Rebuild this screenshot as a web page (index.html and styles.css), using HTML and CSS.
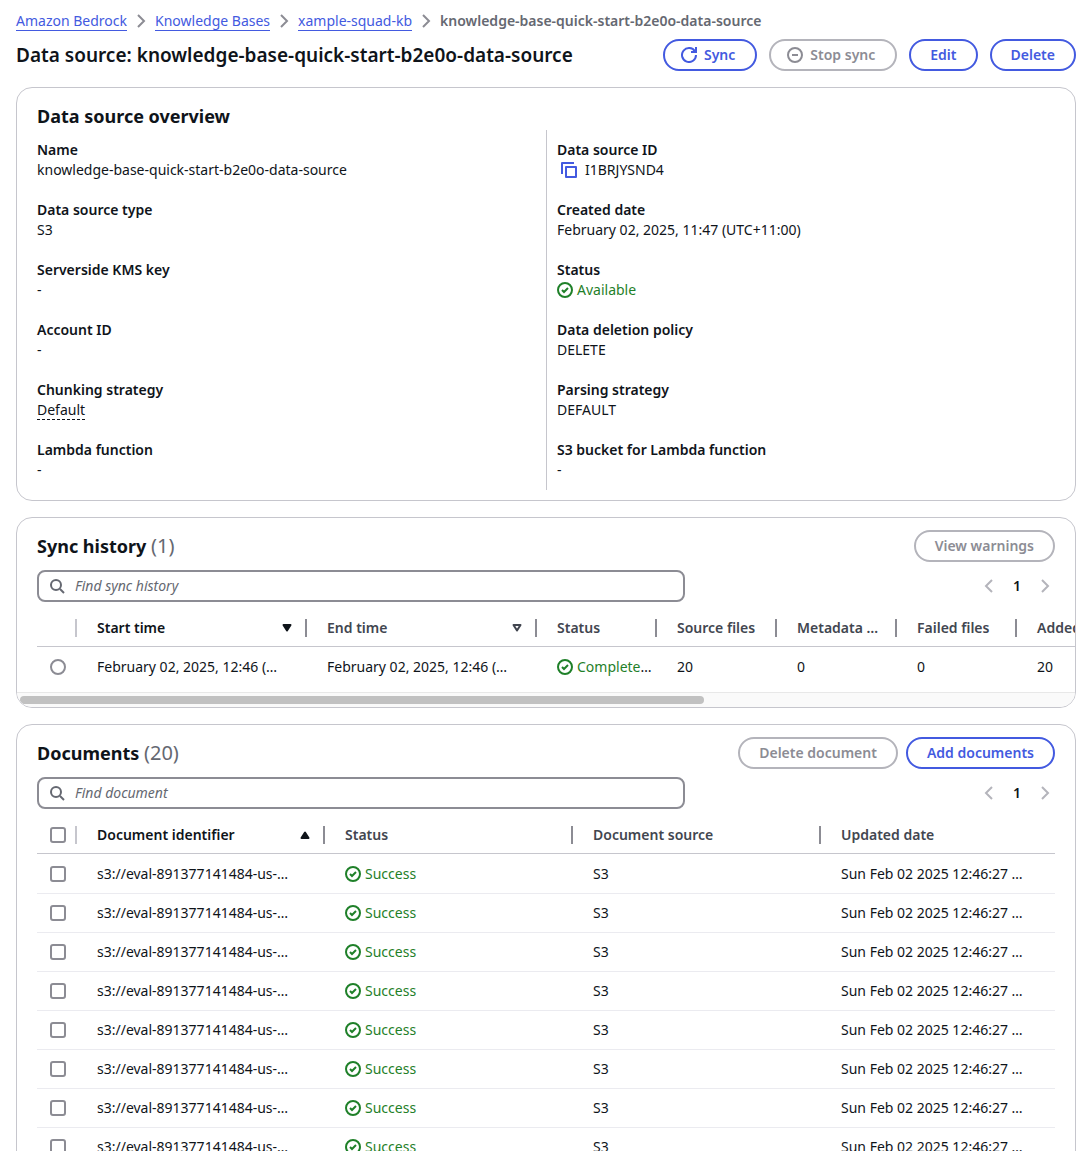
FILE: index.html
```html
<!DOCTYPE html>
<html lang="en">
<head>
<meta charset="utf-8">
<title>knowledge-base-quick-start-b2e0o-data-source</title>
<link rel="stylesheet" href="styles.css">
</head>
<body>
<svg class="sprite" aria-hidden="true">
  <symbol id="chevron" viewBox="0 0 16 16"><path d="m5 2 6 6-6 6"/></symbol>
  <symbol id="refresh" viewBox="0 0 16 16"><path d="M10 5h5V0M15 8A7 7 0 1 1 14 4.4"/></symbol>
  <symbol id="stop" viewBox="0 0 16 16"><circle cx="8" cy="8" r="7"/><path d="M5 8h6"/></symbol>
  <symbol id="copy" viewBox="0 0 16 16"><path d="M5 5h10v10H5zM1 12V1h12" stroke-linejoin="round"/></symbol>
  <symbol id="check" viewBox="0 0 16 16"><circle cx="8" cy="8" r="7"/><path d="m5 8 2 2 4-4"/></symbol>
  <symbol id="search" viewBox="0 0 16 16"><circle cx="7" cy="7" r="5"/><path d="m15 15-4-4"/></symbol>
  <symbol id="sort" viewBox="0 0 16 16"><path d="M4.500 5h7L8 10.500z" stroke-linejoin="round"/></symbol>
</svg>
<main class="page">
  <nav aria-label="Breadcrumbs">
    <ol class="crumbs">
      <li><a href="#">Amazon Bedrock</a><svg class="icon"><use href="#chevron"/></svg></li>
      <li><a href="#">Knowledge Bases</a><svg class="icon"><use href="#chevron"/></svg></li>
      <li><a href="#">xample-squad-kb</a><svg class="icon"><use href="#chevron"/></svg></li>
      <li class="current" aria-current="page">knowledge-base-quick-start-b2e0o-data-source</li>
    </ol>
  </nav>
  <header class="bar title-bar">
    <h1>Data source: knowledge-base-quick-start-b2e0o-data-source</h1>
    <div class="actions wide">
      <button type="button" class="btn with-icon"><svg class="icon"><use href="#refresh"/></svg>Sync</button>
      <button type="button" class="btn with-icon" disabled><svg class="icon"><use href="#stop"/></svg>Stop sync</button>
      <button type="button" class="btn">Edit</button>
      <button type="button" class="btn">Delete</button>
    </div>
  </header>

  <section class="card overview">
    <h2>Data source overview</h2>
    <div class="columns">
      <dl>
        <div><dt>Name</dt><dd>knowledge-base-quick-start-b2e0o-data-source</dd></div>
        <div><dt>Data source type</dt><dd>S3</dd></div>
        <div><dt>Serverside KMS key</dt><dd>-</dd></div>
        <div><dt>Account ID</dt><dd>-</dd></div>
        <div><dt>Chunking strategy</dt><dd><span class="hint">Default</span></dd></div>
        <div><dt>Lambda function</dt><dd>-</dd></div>
      </dl>
      <dl>
        <div><dt>Data source ID</dt><dd class="copyable"><button type="button" class="icon-btn" aria-label="Copy"><svg class="icon"><use href="#copy"/></svg></button>I1BRJYSND4</dd></div>
        <div><dt>Created date</dt><dd>February 02, 2025, 11:47 (UTC+11:00)</dd></div>
        <div><dt>Status</dt><dd><span class="ok"><svg class="icon"><use href="#check"/></svg>Available</span></dd></div>
        <div><dt>Data deletion policy</dt><dd>DELETE</dd></div>
        <div><dt>Parsing strategy</dt><dd>DEFAULT</dd></div>
        <div><dt>S3 bucket for Lambda function</dt><dd>-</dd></div>
      </dl>
    </div>
  </section>

  <section class="card">
    <div class="bar">
      <h2>Sync history <span class="count">(1)</span></h2>
      <div class="actions"><button type="button" class="btn" disabled>View warnings</button></div>
    </div>
    <div class="bar tools">
      <label class="search"><svg class="icon"><use href="#search"/></svg><input type="search" placeholder="Find sync history" aria-label="Find sync history"></label>
      <div class="pager">
        <button type="button" class="icon-btn" aria-label="Previous page" disabled><svg class="icon flip"><use href="#chevron"/></svg></button>
        <button type="button" class="icon-btn page-no">1</button>
        <button type="button" class="icon-btn" aria-label="Next page" disabled><svg class="icon"><use href="#chevron"/></svg></button>
      </div>
    </div>
    <div class="scroller">
      <table class="sync">
        <colgroup><col class="c-select"><col class="c-time"><col class="c-time"><col class="c-count"><col class="c-count"><col class="c-count"><col class="c-count"><col class="c-count"></colgroup>
        <thead><tr>
          <th class="select"></th>
          <th class="sorted"><div class="sort">Start time<svg class="icon solid"><use href="#sort"/></svg></div></th>
          <th><div class="sort">End time<svg class="icon"><use href="#sort"/></svg></div></th>
          <th>Status</th><th>Source files</th><th>Metadata …</th><th>Failed files</th><th>Added</th>
        </tr></thead>
        <tbody><tr>
          <td class="select"><input type="radio" name="sync" aria-label="Select sync"></td>
          <td>February 02, 2025, 12:46 (…</td>
          <td>February 02, 2025, 12:46 (…</td>
          <td class="state"><span class="ok"><svg class="icon"><use href="#check"/></svg>Complete</span>…</td>
          <td>20</td><td>0</td><td>0</td><td>20</td>
        </tr></tbody>
      </table>
    </div>
    <div class="track"><div class="thumb"></div></div>
  </section>

  <section class="card">
    <div class="bar">
      <h2>Documents <span class="count">(20)</span></h2>
      <div class="actions">
        <button type="button" class="btn" disabled>Delete document</button>
        <button type="button" class="btn">Add documents</button>
      </div>
    </div>
    <div class="bar tools">
      <label class="search"><svg class="icon"><use href="#search"/></svg><input type="search" placeholder="Find document" aria-label="Find document"></label>
      <div class="pager">
        <button type="button" class="icon-btn" aria-label="Previous page" disabled><svg class="icon flip"><use href="#chevron"/></svg></button>
        <button type="button" class="icon-btn page-no">1</button>
        <button type="button" class="icon-btn" aria-label="Next page" disabled><svg class="icon"><use href="#chevron"/></svg></button>
      </div>
    </div>
    <div class="scroller inset">
      <table class="docs">
        <colgroup><col class="c-select"><col class="c-doc"><col class="c-doc"><col class="c-doc"><col></colgroup>
        <thead><tr>
          <th class="select"><input type="checkbox" aria-label="Select all documents"></th>
          <th class="sorted"><div class="sort">Document identifier<svg class="icon solid up"><use href="#sort"/></svg></div></th>
          <th>Status</th><th>Document source</th><th>Updated date</th>
        </tr></thead>
        <tbody>
          <tr><td class="select"><input type="checkbox" aria-label="Select document"></td><td>s3://eval-891377141484-us-…</td><td><span class="ok"><svg class="icon"><use href="#check"/></svg>Success</span></td><td>S3</td><td>Sun Feb 02 2025 12:46:27 …</td></tr>
          <tr><td class="select"><input type="checkbox" aria-label="Select document"></td><td>s3://eval-891377141484-us-…</td><td><span class="ok"><svg class="icon"><use href="#check"/></svg>Success</span></td><td>S3</td><td>Sun Feb 02 2025 12:46:27 …</td></tr>
          <tr><td class="select"><input type="checkbox" aria-label="Select document"></td><td>s3://eval-891377141484-us-…</td><td><span class="ok"><svg class="icon"><use href="#check"/></svg>Success</span></td><td>S3</td><td>Sun Feb 02 2025 12:46:27 …</td></tr>
          <tr><td class="select"><input type="checkbox" aria-label="Select document"></td><td>s3://eval-891377141484-us-…</td><td><span class="ok"><svg class="icon"><use href="#check"/></svg>Success</span></td><td>S3</td><td>Sun Feb 02 2025 12:46:27 …</td></tr>
          <tr><td class="select"><input type="checkbox" aria-label="Select document"></td><td>s3://eval-891377141484-us-…</td><td><span class="ok"><svg class="icon"><use href="#check"/></svg>Success</span></td><td>S3</td><td>Sun Feb 02 2025 12:46:27 …</td></tr>
          <tr><td class="select"><input type="checkbox" aria-label="Select document"></td><td>s3://eval-891377141484-us-…</td><td><span class="ok"><svg class="icon"><use href="#check"/></svg>Success</span></td><td>S3</td><td>Sun Feb 02 2025 12:46:27 …</td></tr>
          <tr><td class="select"><input type="checkbox" aria-label="Select document"></td><td>s3://eval-891377141484-us-…</td><td><span class="ok"><svg class="icon"><use href="#check"/></svg>Success</span></td><td>S3</td><td>Sun Feb 02 2025 12:46:27 …</td></tr>
          <tr><td class="select"><input type="checkbox" aria-label="Select document"></td><td>s3://eval-891377141484-us-…</td><td><span class="ok"><svg class="icon"><use href="#check"/></svg>Success</span></td><td>S3</td><td>Sun Feb 02 2025 12:46:27 …</td></tr>
        </tbody>
      </table>
    </div>
  </section>
</main>
</body>
</html>
```
FILE: styles.css
```css
:root {
  --text: #0f141a;
  --heading: #424650;
  --muted: #656871;
  --accent: #435ae0;
  --control: #8c8c94;
  --disabled: #b4b4bb;
  --line: #c6c6cd;
  --row-line: #ebebf0;
  --success: #1f8029;
}

* { box-sizing: border-box; }

body {
  margin: 0;
  height: 100vh;
  overflow-y: auto;
  scrollbar-width: none;
  background: #fff;
  color: var(--text);
  font: 14px/20px "Noto Sans", sans-serif;
}

button, input { font: inherit; color: inherit; }
h1, h2, dl, dd, ol { margin: 0; padding: 0; }

.sprite { display: none; }

.icon {
  width: 16px;
  height: 16px;
  flex: none;
  fill: none;
  stroke: currentColor;
  stroke-width: 2;
}
.icon.solid { fill: currentColor; }
.icon.flip { transform: scaleX(-1); }
.icon.up { transform: scaleY(-1); }

.page { padding: 11px 13px 0 16px; }

/* Breadcrumbs */
.crumbs { display: flex; list-style: none; }
.crumbs li { display: flex; align-items: center; }
.crumbs a { color: var(--accent); text-decoration: none; box-shadow: 0 1px var(--accent); line-height: 18px; }
.crumbs .icon { margin: 0 6px; color: var(--control); }
.crumbs .current { color: var(--muted); font-weight: 600; }

/* Headings and actions */
.bar { display: flex; align-items: center; justify-content: space-between; gap: 8px; }
.title-bar { margin: 8px 0 16px; }
h1 { font-size: 19px; line-height: 24px; font-weight: 600; white-space: nowrap; }
h2 { font-size: 18px; line-height: 24px; font-weight: 700; }
.count { font-size: 20px; font-weight: 400; color: var(--muted); }

.actions { display: flex; gap: 8px; }
.actions.wide { gap: 12px; }

.btn {
  display: flex;
  align-items: center;
  gap: 7px;
  height: 32px;
  padding: 0 19px;
  border: 2px solid var(--accent);
  border-radius: 16px;
  background: #fff;
  color: var(--accent);
  font-weight: 600;
  white-space: nowrap;
}
.btn.with-icon { padding: 0 20px 0 16px; }
.btn:disabled { border-color: var(--disabled); color: var(--control); }

.icon-btn {
  display: flex;
  align-items: center;
  justify-content: center;
  width: 20px;
  height: 20px;
  padding: 0;
  border: 0;
  background: none;
  color: var(--accent);
}
.icon-btn:disabled { color: var(--disabled); }

/* Cards */
.card {
  margin-bottom: 16px;
  padding-top: 12px;
  border: 1px solid var(--line);
  border-radius: 16px;
  overflow: hidden;
}
.card > .bar { padding: 0 20px; }
.card > .tools { margin: 8px 0; }

.overview { padding: 16px 20px 10px; }
.columns { display: grid; grid-template-columns: 1fr 1fr; margin-top: 2px; }
dl { display: grid; gap: 20px; padding: 10px 0; }
dl + dl { padding-left: 10px; border-left: 1px solid var(--line); }
dt { font-weight: 600; }
.hint { border-bottom: 1px dashed var(--text); }
.copyable { display: flex; gap: 6px; padding-left: 2px; }
.ok { color: var(--success); }
.ok .icon { margin-right: 4px; vertical-align: -3px; }

/* Search and paging */
.search {
  display: flex;
  align-items: center;
  gap: 10px;
  flex: 0 1 648px;
  height: 32px;
  padding: 0 10px;
  border: 2px solid var(--control);
  border-radius: 8px;
  color: var(--muted);
}
.search input { flex: 1; min-width: 0; padding: 0; border: 0; outline: 0; background: none; }
.search input::placeholder { color: var(--muted); font-style: italic; opacity: 1; }

.pager { display: flex; gap: 8px; }
.page-no { color: var(--text); font-weight: 600; }

/* Tables */
.scroller { margin-left: 20px; overflow: hidden; }
.scroller.inset { margin-right: 20px; }
table { table-layout: fixed; border-collapse: separate; border-spacing: 0; }
.docs { width: 100%; }
.sync { width: 1100px; margin-bottom: 5px; }
.c-select { width: 40px; }
.c-time { width: 230px; }
.c-count { width: 120px; }
.c-doc { width: 248px; }

th, td {
  padding: 0 12px 0 20px;
  text-align: left;
  overflow: hidden;
  text-overflow: ellipsis;
  white-space: nowrap;
}
th {
  height: 37px;
  border-bottom: 1px solid var(--line);
  color: var(--heading);
  font-weight: 600;
  background: linear-gradient(var(--control), var(--control)) right center / 2px 18px no-repeat;
}
th:last-child { background: none; }
th.select { background-image: linear-gradient(var(--line), var(--line)); }
th.sorted { color: var(--text); }
.sort { display: flex; align-items: center; justify-content: space-between; }
td { height: 39px; border-bottom: 1px solid var(--row-line); }
tr:first-child td { height: 40px; }
.sync td { border-bottom: 0; }
td.state { padding-right: 0; }
th.select, td.select { padding: 0 0 0 13px; }

input[type="checkbox"], input[type="radio"] {
  display: block;
  appearance: none;
  width: 16px;
  height: 16px;
  margin: 0;
  border: 2px solid var(--control);
  border-radius: 3px;
  background: #fff;
}
input[type="radio"] { border-radius: 50%; }

/* Horizontal scroll position of the sync table */
.track { padding: 3px; border-top: 1px solid #e8e8e8; background: #fafafa; }
.thumb { width: 65%; height: 8px; border-radius: 4px; background: #c1c1c1; }
```
